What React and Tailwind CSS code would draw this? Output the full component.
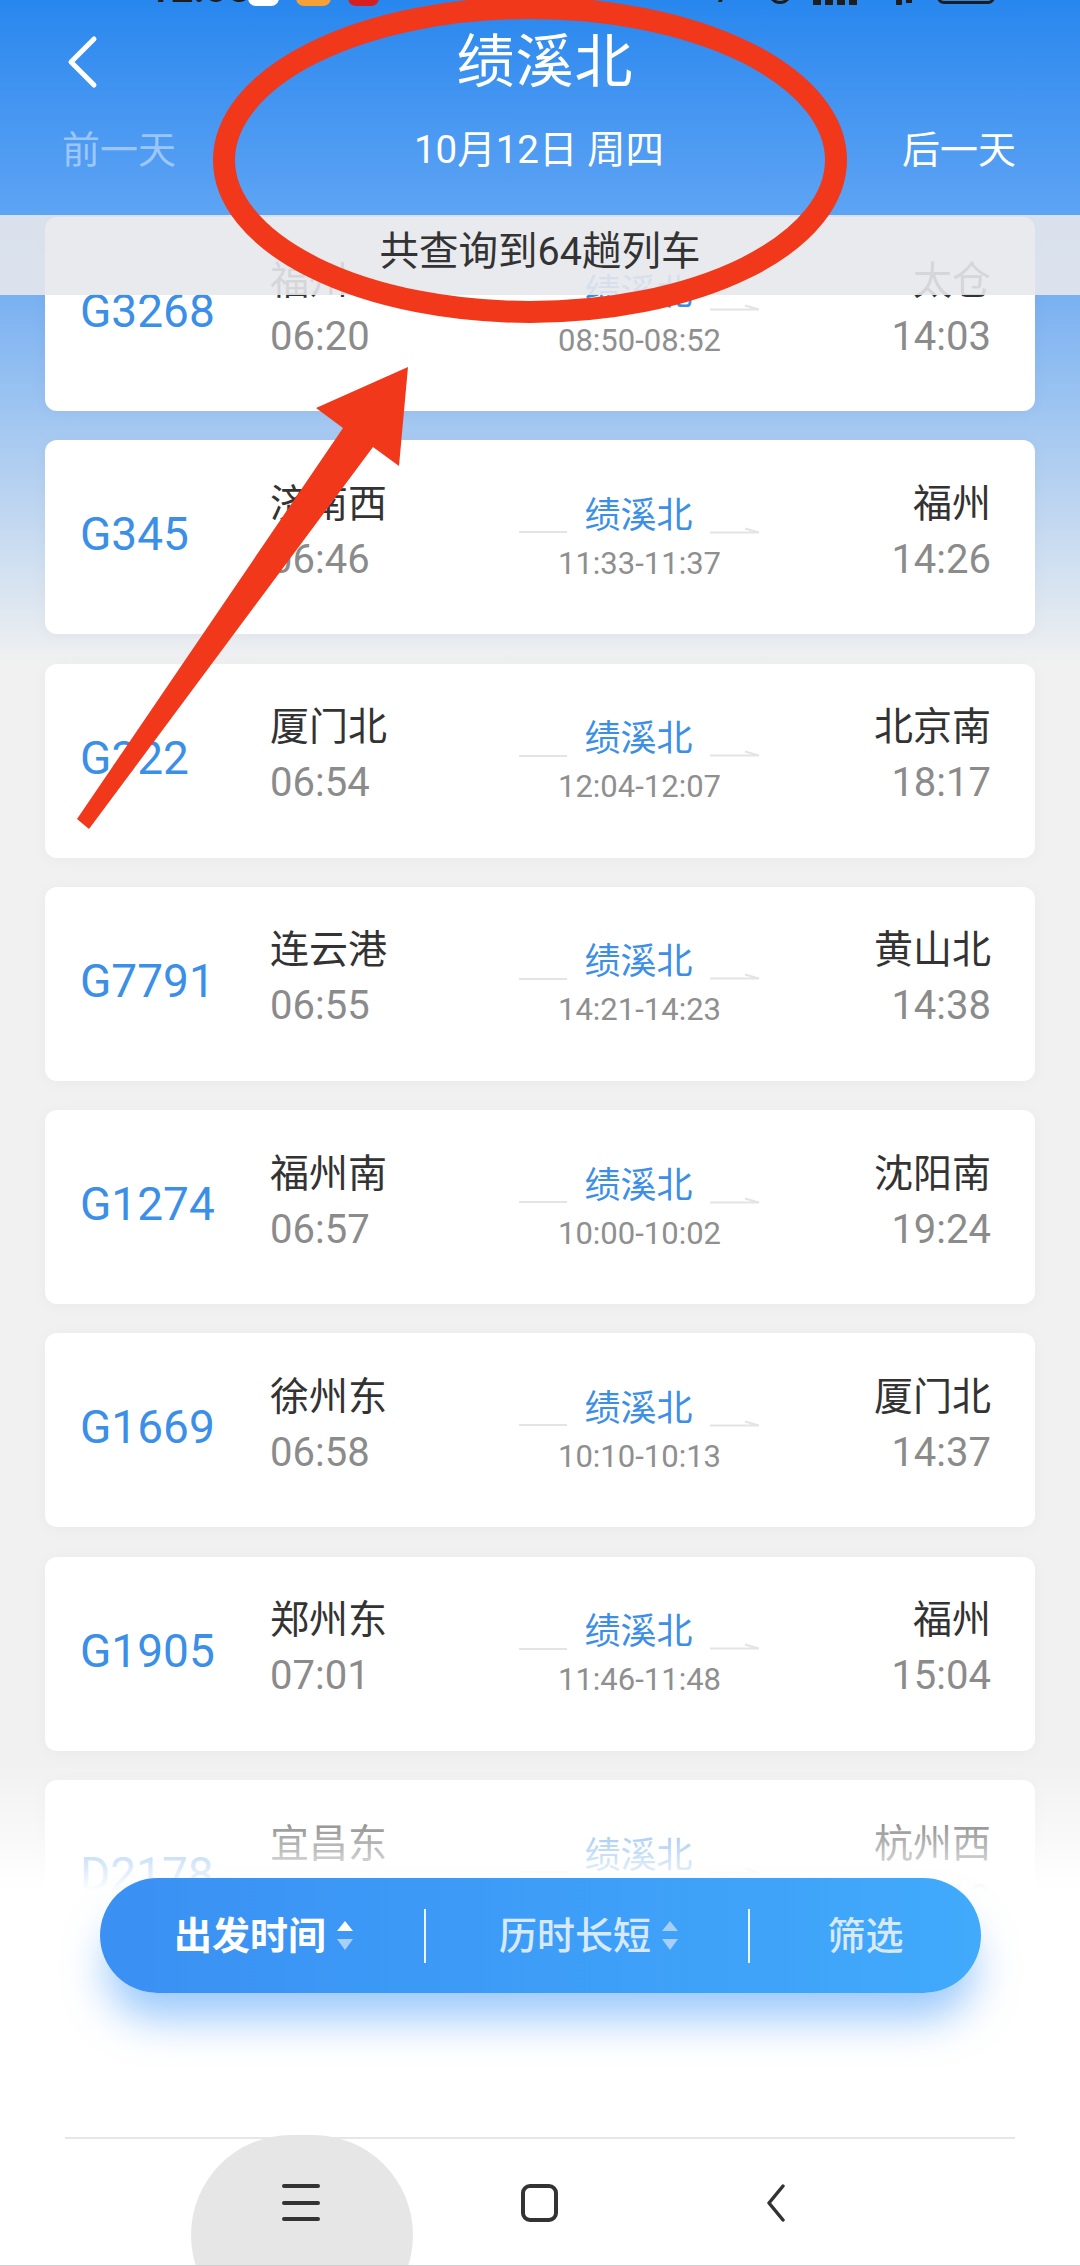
import React from 'react';

const trains = [
  { no: 'G3268', from: '福州', dep: '06:20', stop: '08:50-08:52', to: '太仓', arr: '14:03' },
  { no: 'G345', from: '济南西', dep: '06:46', stop: '11:33-11:37', to: '福州', arr: '14:26' },
  { no: 'G322', from: '厦门北', dep: '06:54', stop: '12:04-12:07', to: '北京南', arr: '18:17' },
  { no: 'G7791', from: '连云港', dep: '06:55', stop: '14:21-14:23', to: '黄山北', arr: '14:38' },
  { no: 'G1274', from: '福州南', dep: '06:57', stop: '10:00-10:02', to: '沈阳南', arr: '19:24' },
  { no: 'G1669', from: '徐州东', dep: '06:58', stop: '10:10-10:13', to: '厦门北', arr: '14:37' },
  { no: 'G1905', from: '郑州东', dep: '07:01', stop: '11:46-11:48', to: '福州', arr: '15:04' },
  { no: 'D2178', from: '宜昌东', dep: '07:05', stop: '12:40-12:42', to: '杭州西', arr: '14:10' },
];

function Card({ t }) {
  return (
    <div className="h-[194px] shrink-0 rounded-[12px] bg-white flex items-center pl-[35px] pr-[44px] shadow-[0_2px_16px_rgba(0,0,0,0.035)]">
      <div className="w-[190px] pb-[6px] text-[46px] leading-none text-[#3b8fe7]">{t.no}</div>
      <div className="w-[200px] flex flex-col pb-[11px]">
        <div className="text-[39px] leading-[56px] text-[#333333]">{t.from}</div>
        <div className="text-[40px] leading-[56px] text-[#8b8b8b]">{t.dep}</div>
      </div>
      <div className="flex-1 flex flex-col items-center pt-[5px]">
        <div className="flex items-center gap-[17px] leading-[47px]">
          <div className="mt-[32px] h-[2px] w-[48px] bg-[#e4e4e4]" />
          <span className="text-[36px] text-[#3d8fe6]">绩溪北</span>
          <svg className="mt-[27px]" width="50" height="8" viewBox="0 0 50 8">
            <path d="M0 6.5 H49 M35 2.5 L49 6.5" stroke="#e4e4e4" strokeWidth="2" fill="none" />
          </svg>
        </div>
        <div className="text-[31px] leading-[47px] text-[#8f8f8f]">{t.stop}</div>
      </div>
      <div className="w-[182px] flex flex-col items-end pb-[11px]">
        <div className="text-[39px] leading-[56px] text-[#333333]">{t.to}</div>
        <div className="text-[40px] leading-[56px] text-[#8b8b8b]">{t.arr}</div>
      </div>
    </div>
  );
}

function SortIcon({ up, down }) {
  return (
    <svg width="16" height="30" viewBox="0 0 16 30">
      <path d="M8 0 L16 10 L0 10 Z" fill={up} />
      <path d="M0 18 L16 18 L8 29 Z" fill={down} />
    </svg>
  );
}

export default function App() {
  return (
    <div className="relative w-[1080px] h-[2266px] overflow-hidden bg-white flex flex-col font-['Roboto','Noto_Sans_CJK_SC',sans-serif]">
      {/* Header */}
      <header className="relative h-[215px] shrink-0 bg-gradient-to-b from-[#2787ee] to-[#5da4f4]">
        {/* status bar slivers */}
        <div className="absolute left-0 top-0 w-full h-[7px] overflow-hidden">
          <span className="absolute left-[148px] top-[-31px] text-[40px] leading-none font-semibold text-[#1d1d1d]">12:05</span>
          <div className="absolute left-[248px] top-[-24px] w-[31px] h-[30px] rounded-[8px] bg-white" />
          <div className="absolute left-[296px] top-[-24px] w-[35px] h-[30px] rounded-[8px] bg-[#f6a035]" />
          <div className="absolute left-[348px] top-[-24px] w-[31px] h-[30px] rounded-[8px] bg-[#d71f1f]" />
          <span className="absolute left-[640px] top-[-32px] text-[38px] leading-none font-semibold text-[#1d1d1d]">1.0K/s</span>
          <div className="absolute left-[768px] top-[-20px] w-[24px] h-[24px] rounded-full border-[3px] border-[#1d1d1d]" />
          <div className="absolute left-[813px] top-[-20px] flex gap-[4px]">
            <div className="w-[8px] h-[25px] bg-[#1d1d1d]" />
            <div className="w-[8px] h-[25px] bg-[#1d1d1d]" />
            <div className="w-[8px] h-[25px] bg-[#1d1d1d]" />
            <div className="w-[8px] h-[25px] bg-[#1d1d1d]" />
          </div>
          <div className="absolute left-[896px] top-[-20px] w-[6px] h-[25px] bg-[#1d1d1d]" />
          <div className="absolute left-[906px] top-[-20px] w-[6px] h-[23px] bg-[#1d1d1d]" />
          <div className="absolute left-[937px] top-[-26px] w-[58px] h-[30px] rounded-[7px] border-[3px] border-[#1d1d1d]" />
        </div>

        <div className="relative h-[124px] flex items-center justify-center pl-[10px]">
          <svg className="absolute left-[66px] top-[35px]" width="34" height="54" viewBox="0 0 34 54">
            <path d="M28 4 L5 27 L28 50" stroke="#ffffff" strokeWidth="5" fill="none" strokeLinecap="round" strokeLinejoin="round" />
          </svg>
          <span className="text-[58px] leading-none font-normal text-white tracking-[1px]">绩溪北</span>
        </div>
        <div className="h-[52px] flex items-center justify-between pl-[62px] pr-[64px]">
          <span className="w-[116px] text-[38px] leading-none text-white/45">前一天</span>
          <span className="text-[38.5px] leading-none text-white">10月12日 周四</span>
          <span className="w-[116px] text-[38px] leading-none text-white text-right">后一天</span>
        </div>
      </header>

      {/* List */}
      <main className="relative flex-1 overflow-hidden bg-[linear-gradient(180deg,#5fa3f2_0px,#a8caf1_225px,#f1f1f1_450px,#f1f1f1_100%)]">
        <div className="flex flex-col gap-[29.3px] px-[45px] pt-[2px]">
          {trains.map((t) => (
            <Card key={t.no} t={t} />
          ))}
        </div>

        {/* sticky count bar */}
        <div className="absolute left-0 top-0 w-full h-[80px] bg-[rgba(231,232,236,0.9)] flex items-center justify-center pb-[6px]">
          <span className="text-[39.5px] leading-none text-[#333333]">共查询到64趟列车</span>
        </div>

        {/* bottom fade */}
        <div className="absolute left-0 right-0 top-[1548px] bottom-0 bg-[linear-gradient(180deg,rgba(255,255,255,0)_0px,#ffffff_128px,#ffffff_100%)]" />

        {/* floating sort bar */}
        <div className="absolute left-[100px] top-[1663px] w-[881px] h-[115px] rounded-full bg-gradient-to-r from-[#3a90f3] to-[#41aafb] shadow-[0_32px_42px_-6px_rgba(60,150,250,0.5)] flex items-center">
          <div className="w-[324px] flex items-center justify-center gap-[11px] pl-[3px]">
            <span className="text-[38px] leading-none font-bold text-white">出发时间</span>
            <SortIcon up="#ffffff" down="#a8cffa" />
          </div>
          <div className="w-[2px] h-[54px] bg-white/90" />
          <div className="w-[322px] flex items-center justify-center gap-[11px] pl-[3px]">
            <span className="text-[38px] leading-none font-medium text-[#d6e9ff]">历时长短</span>
            <SortIcon up="#a8cffa" down="#a8cffa" />
          </div>
          <div className="w-[2px] h-[54px] bg-white/90" />
          <div className="flex-1 flex items-center justify-center">
            <span className="text-[38px] leading-none font-medium text-[#d6e9ff]">筛选</span>
          </div>
        </div>
      </main>

      {/* Navigation bar */}
      <nav className="relative h-[129px] shrink-0 bg-white">
        <div className="absolute left-[191px] top-[-2px] w-[222px] h-[200px] rounded-full bg-[#e6e6e6]" />
        <div className="relative h-[2px] mx-[65px] bg-[#e6e6e6]" />
        <div className="relative h-[127px] flex items-center pl-[282px]">
          <div className="w-[38px] flex flex-col gap-[12.5px]">
            <div className="h-[4px] rounded-full bg-[#333333]" />
            <div className="h-[4px] rounded-full bg-[#333333]" />
            <div className="h-[4px] rounded-full bg-[#333333]" />
          </div>
          <div className="ml-[201px] w-[37px] h-[38px] rounded-[9px] border-[4px] border-[#333333]" />
          <svg className="ml-[207px]" width="22" height="38" viewBox="0 0 22 38">
            <path d="M18 2 L4 19 L18 36" stroke="#333333" strokeWidth="3.5" fill="none" strokeLinecap="round" strokeLinejoin="round" />
          </svg>
        </div>
        <div className="absolute left-0 bottom-0 w-full h-[1px] bg-[#cfcfcf]" />
      </nav>

      {/* red annotations */}
      <svg className="absolute left-0 top-0 pointer-events-none" width="1080" height="2266" viewBox="0 0 1080 2266">
        <ellipse cx="530" cy="160" rx="306" ry="152" fill="none" stroke="#f1381a" strokeWidth="22" />
        <polygon
          points="408,367 399,466 373,447 89,829 77,819 343,428 316,408"
          fill="#f1381a"
        />
      </svg>
    </div>
  );
}
